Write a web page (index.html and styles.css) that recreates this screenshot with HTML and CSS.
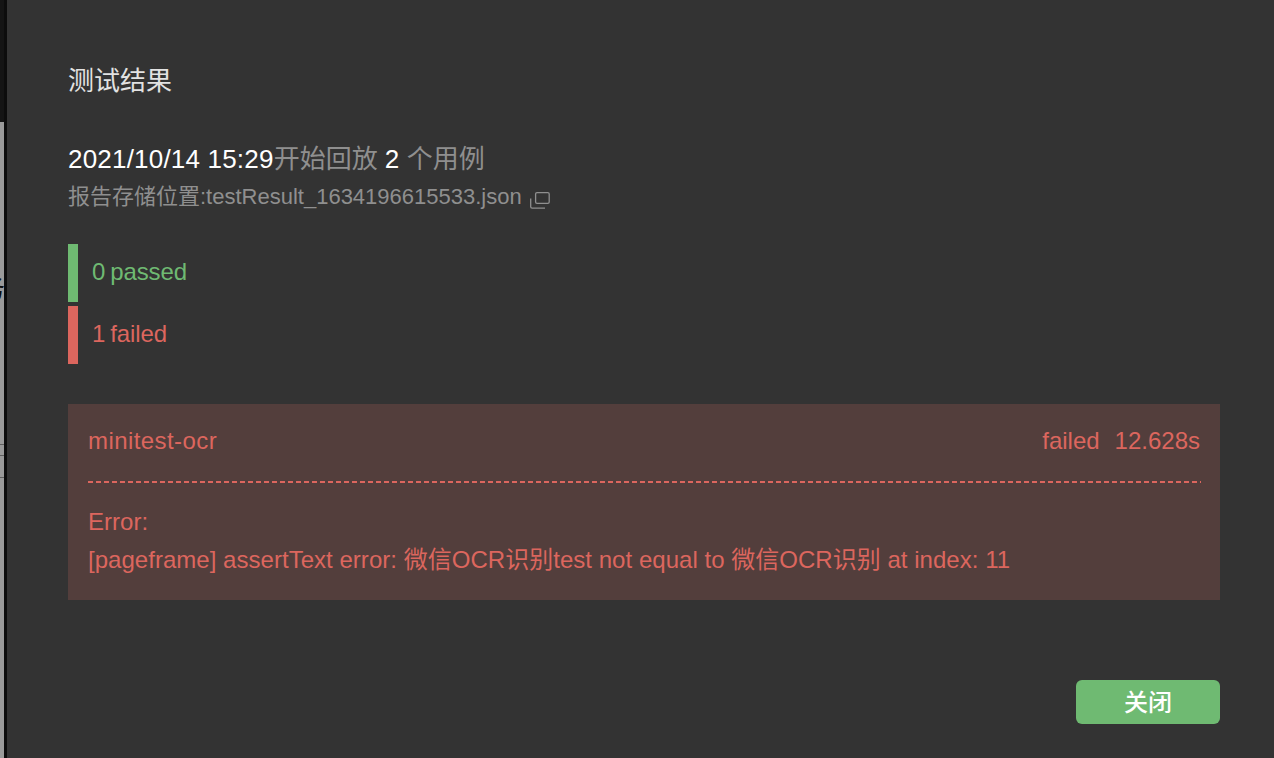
FILE: index.html
```html
<!DOCTYPE html>
<html lang="zh-CN">
<head>
<meta charset="utf-8">
<title>测试结果</title>
<link rel="stylesheet" href="styles.css">
</head>
<body>
<div class="backdrop">
  <div class="backdrop-top"></div>
  <div class="backdrop-rest">
    <div class="peek">务</div>
    <div class="rule-a"></div>
    <div class="rule-b"></div>
    <div class="rule-c"></div>
  </div>
</div>
<main class="dialog">
  <h1 class="title">测试结果</h1>
  <p class="run"><span class="time">2021/10/14 15:29</span>开始回放 <span class="time">2</span> 个用例</p>
  <p class="report"><span>报告存储位置:testResult_1634196615533.json</span>
    <svg class="copy" width="20" height="17" viewBox="0 0 20 17" fill="none" stroke="#8f8f8f" stroke-width="1.3"><rect x="5.6" y="0.7" width="13.6" height="10.6" rx="1.4"/><path d="M0.7 6.6V14.8a1.4 1.4 0 0 0 1.4 1.4H15"/></svg>
  </p>
  <div class="summary">
    <div class="stat pass"><span class="count">0</span>passed</div>
    <div class="stat fail"><span class="count">1</span>failed</div>
  </div>
  <section class="case">
    <header class="case-head">
      <span class="case-name">minitest-ocr</span>
      <span class="case-meta"><span>failed</span><span>12.628s</span></span>
    </header>
    <div class="case-rule"></div>
    <div class="case-error">
      <div>Error:</div>
      <div>[pageframe] assertText error: 微信OCR识别test not equal to 微信OCR识别 at index: 11</div>
    </div>
  </section>
  <footer class="actions"><button class="close">关闭</button></footer>
</main>
</body>
</html>
```
FILE: styles.css
```css
* { box-sizing: border-box; }
html, body { margin: 0; height: 100%; }
body {
  display: flex;
  width: 1274px;
  height: 758px;
  overflow: hidden;
  background: #333;
  font-family: "Liberation Sans", "Noto Sans CJK SC", sans-serif;
}
.backdrop {
  flex: 0 0 7px;
  width: 7px;
  min-width: 0;
  overflow: hidden;
  display: flex;
  flex-direction: column;
  border-right: 3px solid #0c0c0c;
  background: #9a9a9a;
}
.backdrop-top { height: 122px; background: #141414; }
.backdrop-rest { flex: 1; width: 4px; overflow: hidden; }
.peek {
  margin-top: 152px;
  height: 30px;
  width: 26px;
  margin-left: -21px;
  font-size: 26px;
  line-height: 30px;
  color: #0c0c0c;
}
.rule-a, .rule-b, .rule-c { height: 1px; background: #5f5f5f; }
.rule-a { margin-top: 140px; }
.rule-b { margin-top: 10px; }
.rule-c { margin-top: 21px; }
.dialog {
  flex: 1;
  min-width: 0;
  display: flex;
  flex-direction: column;
  padding: 66px 54px 34px 61px;
}
.title {
  margin: 0;
  font-size: 26px;
  line-height: 30px;
  font-weight: 400;
  color: #e2e2e2;
}
.run {
  margin: 48px 0 0;
  font-size: 26px;
  line-height: 30px;
  color: #8f8f8f;
}
.time { color: #fff; letter-spacing: 0.2px; }
.report {
  margin: 8px 0 0;
  display: flex;
  align-items: center;
  gap: 8px;
  font-size: 22px;
  line-height: 30px;
  color: #8f8f8f;
}
.copy { margin-top: 6px; }
.summary {
  margin-top: 32px;
  display: flex;
  flex-direction: column;
  gap: 4px;
}
.stat {
  height: 58px;
  padding-left: 14px;
  padding-bottom: 2px;
  display: flex;
  align-items: center;
  font-size: 24px;
  letter-spacing: -0.12px;
  border-left: 10px solid;
}
.count { margin-right: 5px; }
.pass { color: #6fba72; border-color: #6fba72; }
.fail { color: #dc665e; border-color: #dc665e; }
.case {
  margin-top: 40px;
  height: 196px;
  padding: 19px 20px 0;
  background: #533e3c;
  color: #dc665e;
  font-size: 24px;
}
.case-head {
  display: flex;
  justify-content: space-between;
  height: 36px;
  line-height: 36px;
}
.case-name { letter-spacing: 0.42px; }
.case-meta { display: flex; gap: 15px; }
.case-rule {
  height: 2px;
  margin: 22px -1px 0 0;
  background: repeating-linear-gradient(90deg, #dc665e 0 5px, transparent 5px 8px);
}
.case-error {
  margin-top: 20px;
  line-height: 38px;
  letter-spacing: 0.03px;
}
.actions {
  margin-top: auto;
  display: flex;
  justify-content: flex-end;
}
.close {
  width: 144px;
  height: 44px;
  padding: 0 0 4px;
  border: 0;
  border-radius: 6px;
  background: #6fba72;
  color: #fff;
  font: 500 24px "Liberation Sans", "Noto Sans CJK SC", sans-serif;
}
```
